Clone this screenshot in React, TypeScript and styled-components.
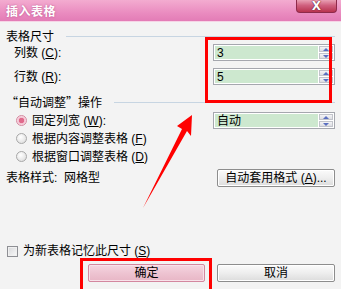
import React from "react";
import styled, { createGlobalStyle } from "styled-components";

const Global = createGlobalStyle`
  html, body { margin: 0; padding: 0; background: #f3f3f3; }
  body { font-family: "Liberation Sans", "Noto Sans CJK SC", sans-serif; font-size: 12px; color: #000; }
  u { text-decoration: underline; text-underline-offset: 1px; }
`;

const Window = styled.div`
  position: relative;
  width: 341px;
  height: 289px;
  background: #f3f3f3;
  overflow: hidden;
  display: flex;
  flex-direction: column;
`;

const TitleBar = styled.div`
  height: 22px;
  flex: none;
  background: linear-gradient(#f3acd0, #ea8cc0 60%, #e37cb6);
  border-bottom: 1px solid #f6d4e6;
  box-sizing: border-box;
  display: flex;
  align-items: center;
  justify-content: space-between;
  padding-left: 6px;
`;

const Title = styled.span`
  color: #fff;
  font-weight: bold;
  font-size: 12px;
  letter-spacing: 0.5px;
  text-shadow: 0 0 2px rgba(150, 40, 100, 0.6);
`;

const CloseBtn = styled.div`
  align-self: flex-start;
  width: 41px;
  height: 13px;
  margin-right: 4px;
  box-sizing: border-box;
  border: 1px solid #8e2a4a;
  border-top: none;
  border-radius: 0 0 4px 4px;
  background: linear-gradient(#e9a0b4, #d0607e 45%, #b8334f);
  display: flex;
  align-items: center;
  justify-content: center;
  color: #fff;
  font-family: "DejaVu Sans", sans-serif;
  font-weight: bold;
  font-size: 12px;
  line-height: 1;
  text-shadow: 0 0 1px #5a1020, 0 0 1px #5a1020;
`;

const Content = styled.div`
  flex: 1;
  display: flex;
  flex-direction: column;
  padding: 0 6px 7px 6px;
`;

const GroupHeader = styled.div<{ $top: number }>`
  height: 14px;
  margin-top: ${(p) => p.$top}px;
  display: flex;
  align-items: center;
  gap: 12px;
  line-height: 14px;
  font-family: "Noto Sans CJK SC", sans-serif;
  &::after {
    content: "";
    flex: 1;
    height: 1px;
    background: #c7d5e2;
  }
`;

const Row = styled.div<{ $top: number; $h?: number; $indent?: number }>`
  height: ${(p) => p.$h ?? 17}px;
  margin-top: ${(p) => p.$top}px;
  padding-left: ${(p) => p.$indent ?? 0}px;
  display: flex;
  align-items: center;
  justify-content: space-between;
  line-height: 14px;
`;

const Label = styled.span`
  display: flex;
  align-items: center;
  gap: 5px;
  white-space: nowrap;
`;

const Text = styled.span`
  white-space: nowrap;
`;

const Field = styled.div`
  width: 122px;
  height: 17px;
  box-sizing: border-box;
  border: 1px solid #a5a7ae;
  padding: 1px;
  background: #fff;
  display: flex;
`;

const FieldText = styled.div`
  flex: 1;
  background: #cde8cf;
  padding-left: 2px;
  display: flex;
  align-items: center;
  font-size: 12px;
`;

const Spin = styled.div`
  width: 14px;
  display: flex;
  flex-direction: column;
  gap: 1px;
  margin-left: 1px;
`;

const SpinBtn = styled.div<{ $down?: boolean }>`
  flex: 1;
  background: linear-gradient(#f4f4f6, #dcdde2);
  border: 1px solid #c2c4cb;
  box-sizing: border-box;
  display: flex;
  align-items: center;
  justify-content: center;
  &::after {
    content: "";
    width: 0;
    height: 0;
    border-left: 3px solid transparent;
    border-right: 3px solid transparent;
    ${(p) =>
      p.$down ? "border-top: 3px solid #5a6fc0;" : "border-bottom: 3px solid #5a6fc0;"}
  }
`;

const Radio = styled.span<{ $checked?: boolean }>`
  width: 11px;
  height: 11px;
  border-radius: 50%;
  box-sizing: border-box;
  border: 1px solid ${(p) => (p.$checked ? "#d48aa0" : "#a8a8a8")};
  background: ${(p) =>
    p.$checked
      ? "radial-gradient(circle, #e06a8c 0 2.5px, #f3c0d0 3px, #fbe4ec 5px)"
      : "radial-gradient(circle at 40% 35%, #ffffff, #d8d8d8)"};
  flex: none;
`;

const Check = styled.span`
  width: 11px;
  height: 11px;
  box-sizing: border-box;
  border: 1px solid #8e8f94;
  background: linear-gradient(135deg, #d6d7da, #fafafa);
  box-shadow: inset 0 0 0 1px #f0f0f0;
  flex: none;
`;

const Button = styled.button<{ $primary?: boolean; $w: number }>`
  width: ${(p) => p.$w}px;
  height: 18px;
  box-sizing: border-box;
  padding: 0;
  font-family: inherit;
  font-size: 12px;
  line-height: 14px;
  color: #000;
  border-radius: 2px;
  border: 1px solid ${(p) => (p.$primary ? "#d3879f" : "#8d8d8d")};
  background: ${(p) =>
    p.$primary
      ? "linear-gradient(#f5d6e0, #eec4d2 50%, #e8b6c6)"
      : "linear-gradient(#fbfbfb, #eeeeee 50%, #dcdcdc)"};
  box-shadow: inset 0 0 0 1px ${(p) => (p.$primary ? "#f8e2ea" : "#ffffff")};
  display: flex;
  align-items: center;
  justify-content: center;
`;

const Spacer = styled.div`
  flex: 1;
`;

const ButtonRow = styled.div`
  margin-top: 6px;
  display: flex;
  justify-content: flex-end;
  gap: 12px;
`;

const Highlight = styled.div<{ $x: number; $y: number; $w: number; $h: number }>`
  position: absolute;
  left: ${(p) => p.$x}px;
  top: ${(p) => p.$y}px;
  width: ${(p) => p.$w}px;
  height: ${(p) => p.$h}px;
  border: 3px solid #ff0000;
  box-sizing: border-box;
  pointer-events: none;
`;

const Overlay = styled.svg`
  position: absolute;
  left: 0;
  top: 0;
  pointer-events: none;
`;

const SpinField = ({ value }: { value: string }) => (
  <Field>
    <FieldText>{value}</FieldText>
    <Spin>
      <SpinBtn />
      <SpinBtn $down />
    </Spin>
  </Field>
);

export default function App() {
  return (
    <>
      <Global />
      <Window>
        <TitleBar>
          <Title>插入表格</Title>
          <CloseBtn>X</CloseBtn>
        </TitleBar>
        <Content>
          <GroupHeader $top={7}>表格尺寸</GroupHeader>
          <Row $top={1} $indent={8}>
            <Text>
              列数 (<u>C</u>):
            </Text>
            <SpinField value="3" />
          </Row>
          <Row $top={7} $indent={8}>
            <Text>
              行数 (<u>R</u>):
            </Text>
            <SpinField value="5" />
          </Row>
          <GroupHeader $top={10}>“自动调整”操作</GroupHeader>
          <Row $top={3} $indent={10}>
            <Label>
              <Radio $checked />
              <Text>
                固定列宽 (<u>W</u>):
              </Text>
            </Label>
            <SpinField value="自动" />
          </Row>
          <Row $top={1} $indent={10}>
            <Label>
              <Radio />
              <Text>
                根据内容调整表格 (<u>F</u>)
              </Text>
            </Label>
          </Row>
          <Row $top={1} $indent={10}>
            <Label>
              <Radio />
              <Text>
                根据窗口调整表格 (<u>D</u>)
              </Text>
            </Label>
          </Row>
          <Row $top={4} $h={18}>
            <Text>表格样式:&nbsp;&nbsp;网格型</Text>
            <Button $w={118}>
              <Text>
                自动套用格式 (<u>A</u>)...
              </Text>
            </Button>
          </Row>
          <Spacer />
          <Row $top={0} $h={14} $indent={1}>
            <Label>
              <Check />
              <Text>
                为新表格记忆此尺寸 (<u>S</u>)
              </Text>
            </Label>
          </Row>
          <ButtonRow>
            <Button $primary $w={117}>
              确定
            </Button>
            <Button $w={118}>取消</Button>
          </ButtonRow>
        </Content>
        <Highlight $x={205} $y={37} $w={127} $h={66} />
        <Highlight $x={80} $y={258} $w={132} $h={40} />
        <Overlay width="341" height="289" viewBox="0 0 341 289">
          <polygon
            points="192,115 177,126 182,129 143,208 187,131 191,136"
            fill="#ff0000"
          />
        </Overlay>
      </Window>
    </>
  );
}
